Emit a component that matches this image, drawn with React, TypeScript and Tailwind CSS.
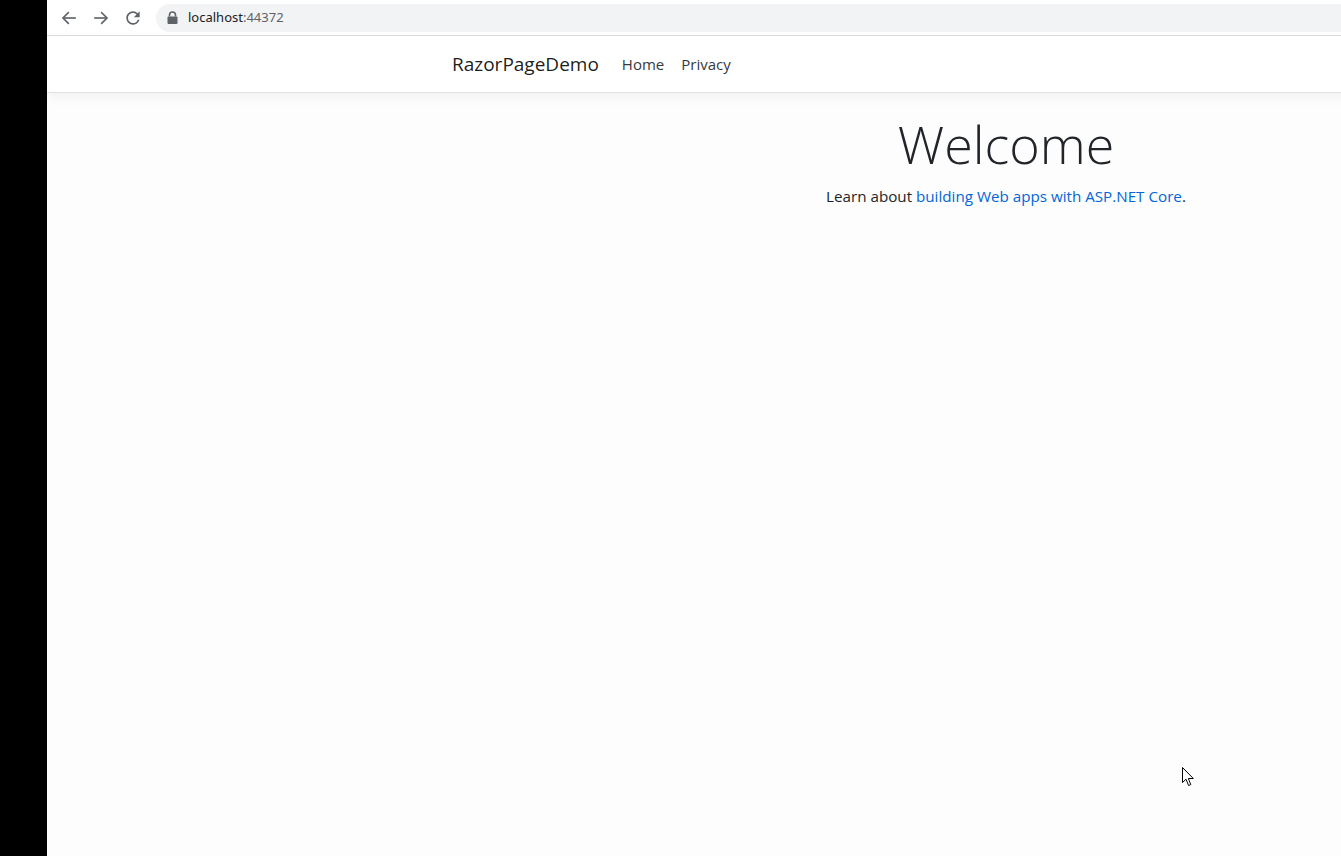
import React from "react";

const Back = () => (
  <svg width="18" height="18" viewBox="0 0 24 24" fill="none" stroke="#5f6368" strokeWidth="2.2" strokeLinecap="square">
    <path d="M20 12H5" />
    <path d="M11 5l-7 7 7 7" />
  </svg>
);
const Fwd = () => (
  <svg width="18" height="18" viewBox="0 0 24 24" fill="none" stroke="#5f6368" strokeWidth="2.2" strokeLinecap="square">
    <path d="M4 12h15" />
    <path d="M13 5l7 7-7 7" />
  </svg>
);
const Reload = () => (
  <svg width="20" height="20" viewBox="0 0 24 24" fill="#5f6368">
    <path d="M17.65 6.35A7.958 7.958 0 0 0 12 4c-4.42 0-7.99 3.58-7.99 8s3.57 8 7.99 8c3.73 0 6.84-2.55 7.730-6h-2.08A5.99 5.99 0 0 1 12 18c-3.31 0-6-2.69-6-6s2.69-6 6-6c1.66 0 3.14.69 4.22 1.78L13 11h7V4l-2.35 2.35z" />
  </svg>
);
const Lock = () => (
  <svg width="11" height="13" viewBox="0 0 11 13" fill="#5f6368">
    <rect x="0.5" y="5.5" width="10" height="7.5" rx="1" />
    <path d="M2.5 5.5V4a3 3 0 0 1 6 0v1.5" fill="none" stroke="#5f6368" strokeWidth="1.6" />
  </svg>
);

export default function App() {
  return (
    <div
      className="relative flex h-[856px] w-[1341px] overflow-hidden bg-black"
      style={{ fontFamily: '"Open Sans", "Noto Sans", Arial, sans-serif' }}
    >
      <div className="w-[47px] shrink-0 bg-black" />
      <div className="flex flex-1 flex-col bg-[#fdfdfd]">
        {/* browser toolbar */}
        <div className="flex h-[36px] shrink-0 items-center border-b border-[#dadce0] bg-white">
          <div className="flex items-center gap-[14px] pl-[13px]">
            <Back />
            <Fwd />
            <div className="-ml-[1px]">
              <Reload />
            </div>
          </div>
          <div className="ml-[13px] flex h-[28px] flex-1 items-center rounded-l-full bg-[#f1f3f4] pl-[11px]">
            <Lock />
            <span className="ml-[10px] text-[13px] text-[#202124]" style={{ fontFamily: '"Noto Sans", Arial, sans-serif' }}>
              localhost<span className="text-[#5f6368]">:44372</span>
            </span>
          </div>
        </div>
        {/* navbar */}
        <div className="flex h-[57px] shrink-0 items-center border-b border-[#dee2e6] bg-white pl-[405px] shadow-[0_4px_12px_rgba(0,0,0,0.05)]">
          <span className="text-[19px] text-[rgba(0,0,0,0.9)]">RazorPageDemo</span>
          <span className="ml-[23px] text-[15px] text-[#343a40]">Home</span>
          <span className="ml-[17px] text-[15px] text-[#343a40]">Privacy</span>
        </div>
        {/* content */}
        <div className="ml-[559px] w-[800px] pt-[17px] text-center text-[#212529]">
          <h1 className="mb-[7px] text-[52px] font-light leading-[67px]">Welcome</h1>
          <p className="text-[15.2px] leading-[24px]">
            Learn about <span className="text-[#0366d6]">building Web apps with ASP.NET Core</span>.
          </p>
        </div>
      </div>
      {/* cursor */}
      <svg className="absolute left-[1182px] top-[767px]" width="13" height="20" viewBox="0 0 13 20">
        <path d="M0.5 0.5 L0.5 15.5 L4 12.2 L6.6 18.5 L8.8 17.6 L6.3 11.5 L11.3 11.5 Z" fill="white" stroke="black" strokeWidth="1" strokeLinejoin="round" />
      </svg>
    </div>
  );
}
